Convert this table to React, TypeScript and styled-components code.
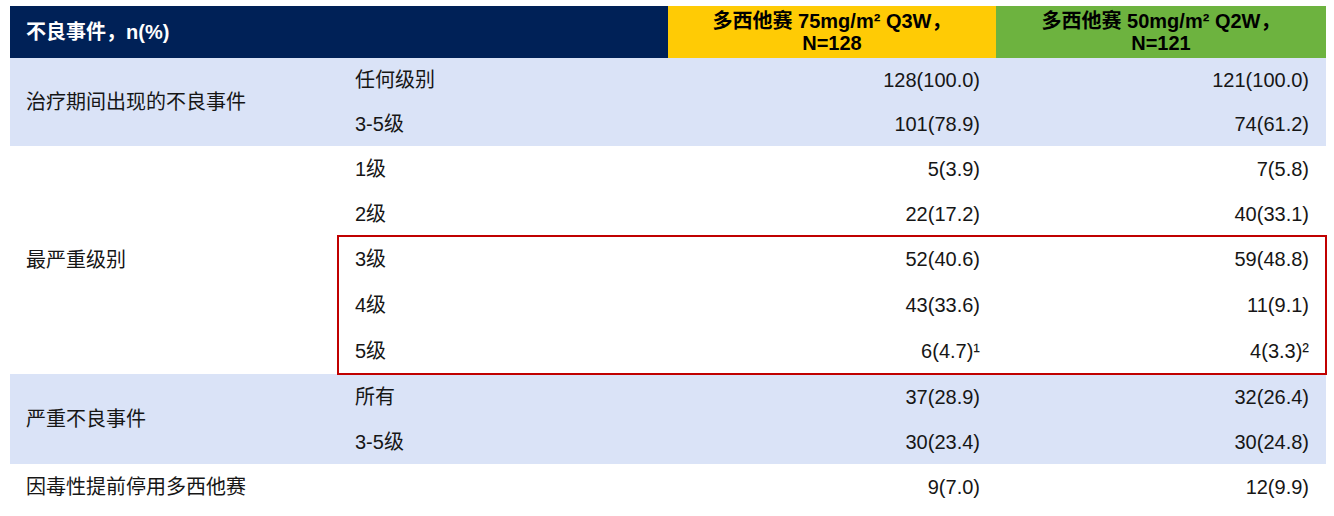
import React from 'react';
import styled, { createGlobalStyle } from 'styled-components';

const GlobalStyle = createGlobalStyle`
  body {
    margin: 0;
    background: #ffffff;
  }
`;

const NAVY = '#002157';
const YELLOW = '#ffcb05';
const GREEN = '#6db33f';
const LIGHT = '#dae3f7';
const RED = '#c00000';

const Table = styled.div`
  width: 1316px;
  margin: 6px 0 0 10px;
  font-family: "Liberation Sans", "Noto Sans CJK SC", sans-serif;
  font-size: 20px;
  color: #161616;
`;

const HeaderRow = styled.div`
  display: grid;
  grid-template-columns: 658px 328px 330px;
  height: 52px;
`;

const HeaderCell = styled.div<{ bg: string; align?: 'left' | 'center' }>`
  background: ${p => p.bg};
  color: ${p => (p.bg === NAVY ? '#ffffff' : '#000000')};
  font-weight: 700;
  display: flex;
  flex-direction: column;
  justify-content: center;
  align-items: ${p => (p.align === 'left' ? 'flex-start' : 'center')};
  padding: ${p => (p.align === 'left' ? '0 16px' : '0')};
  line-height: 22px;
  text-align: center;
`;

const Group = styled.div<{ bg: string }>`
  display: flex;
  background: ${p => p.bg};
`;

const GroupLabel = styled.div`
  width: 328px;
  padding-left: 16px;
  display: flex;
  align-items: center;
  line-height: 1.2;
`;

const RowStack = styled.div`
  flex: 1;
  display: flex;
  flex-direction: column;
`;

const Highlight = styled.div`
  outline: 2px solid ${RED};
  outline-offset: -1px;
`;

const Row = styled.div<{ h: number }>`
  display: grid;
  grid-template-columns: 330px 328px 330px;
  height: ${p => p.h}px;
  align-items: center;
  line-height: 1.2;
`;

const SubLabel = styled.div`
  padding-left: 17px;
`;

const Value = styled.div<{ pr: number }>`
  text-align: right;
  padding-right: ${p => p.pr}px;
`;

type RowData = { sub: string; a: string; b: string; h: number };

const DataRow: React.FC<{ r: RowData }> = ({ r }) => (
  <Row h={r.h}>
    <SubLabel>{r.sub}</SubLabel>
    <Value pr={16}>{r.a}</Value>
    <Value pr={17}>{r.b}</Value>
  </Row>
);

const teae: RowData[] = [
  { sub: '任何级别', a: '128(100.0)', b: '121(100.0)', h: 44 },
  { sub: '3-5级', a: '101(78.9)', b: '74(61.2)', h: 44 },
];

const worstLow: RowData[] = [
  { sub: '1级', a: '5(3.9)', b: '7(5.8)', h: 45 },
  { sub: '2级', a: '22(17.2)', b: '40(33.1)', h: 45 },
];

const worstHigh: RowData[] = [
  { sub: '3级', a: '52(40.6)', b: '59(48.8)', h: 46 },
  { sub: '4级', a: '43(33.6)', b: '11(9.1)', h: 46 },
  { sub: '5级', a: '6(4.7)¹', b: '4(3.3)²', h: 46 },
];

const serious: RowData[] = [
  { sub: '所有', a: '37(28.9)', b: '32(26.4)', h: 45 },
  { sub: '3-5级', a: '30(23.4)', b: '30(24.8)', h: 45 },
];

const discontinued: RowData[] = [{ sub: '', a: '9(7.0)', b: '12(9.9)', h: 46 }];

const App: React.FC = () => {
  return (
    <>
      <GlobalStyle />
      <Table>
        <HeaderRow>
          <HeaderCell bg={NAVY} align="left">不良事件，n(%)</HeaderCell>
          <HeaderCell bg={YELLOW}>
            <span>多西他赛 75mg/m² Q3W，</span>
            <span>N=128</span>
          </HeaderCell>
          <HeaderCell bg={GREEN}>
            <span>多西他赛 50mg/m² Q2W，</span>
            <span>N=121</span>
          </HeaderCell>
        </HeaderRow>

        <Group bg={LIGHT}>
          <GroupLabel>治疗期间出现的不良事件</GroupLabel>
          <RowStack>
            {teae.map(r => <DataRow key={r.sub} r={r} />)}
          </RowStack>
        </Group>

        <Group bg="#ffffff">
          <GroupLabel>最严重级别</GroupLabel>
          <RowStack>
            {worstLow.map(r => <DataRow key={r.sub} r={r} />)}
            <Highlight>
              {worstHigh.map(r => <DataRow key={r.sub} r={r} />)}
            </Highlight>
          </RowStack>
        </Group>

        <Group bg={LIGHT}>
          <GroupLabel>严重不良事件</GroupLabel>
          <RowStack>
            {serious.map(r => <DataRow key={r.sub} r={r} />)}
          </RowStack>
        </Group>

        <Group bg="#ffffff">
          <GroupLabel>因毒性提前停用多西他赛</GroupLabel>
          <RowStack>
            {discontinued.map(r => <DataRow key="stop" r={r} />)}
          </RowStack>
        </Group>
      </Table>
    </>
  );
};

export default App;
